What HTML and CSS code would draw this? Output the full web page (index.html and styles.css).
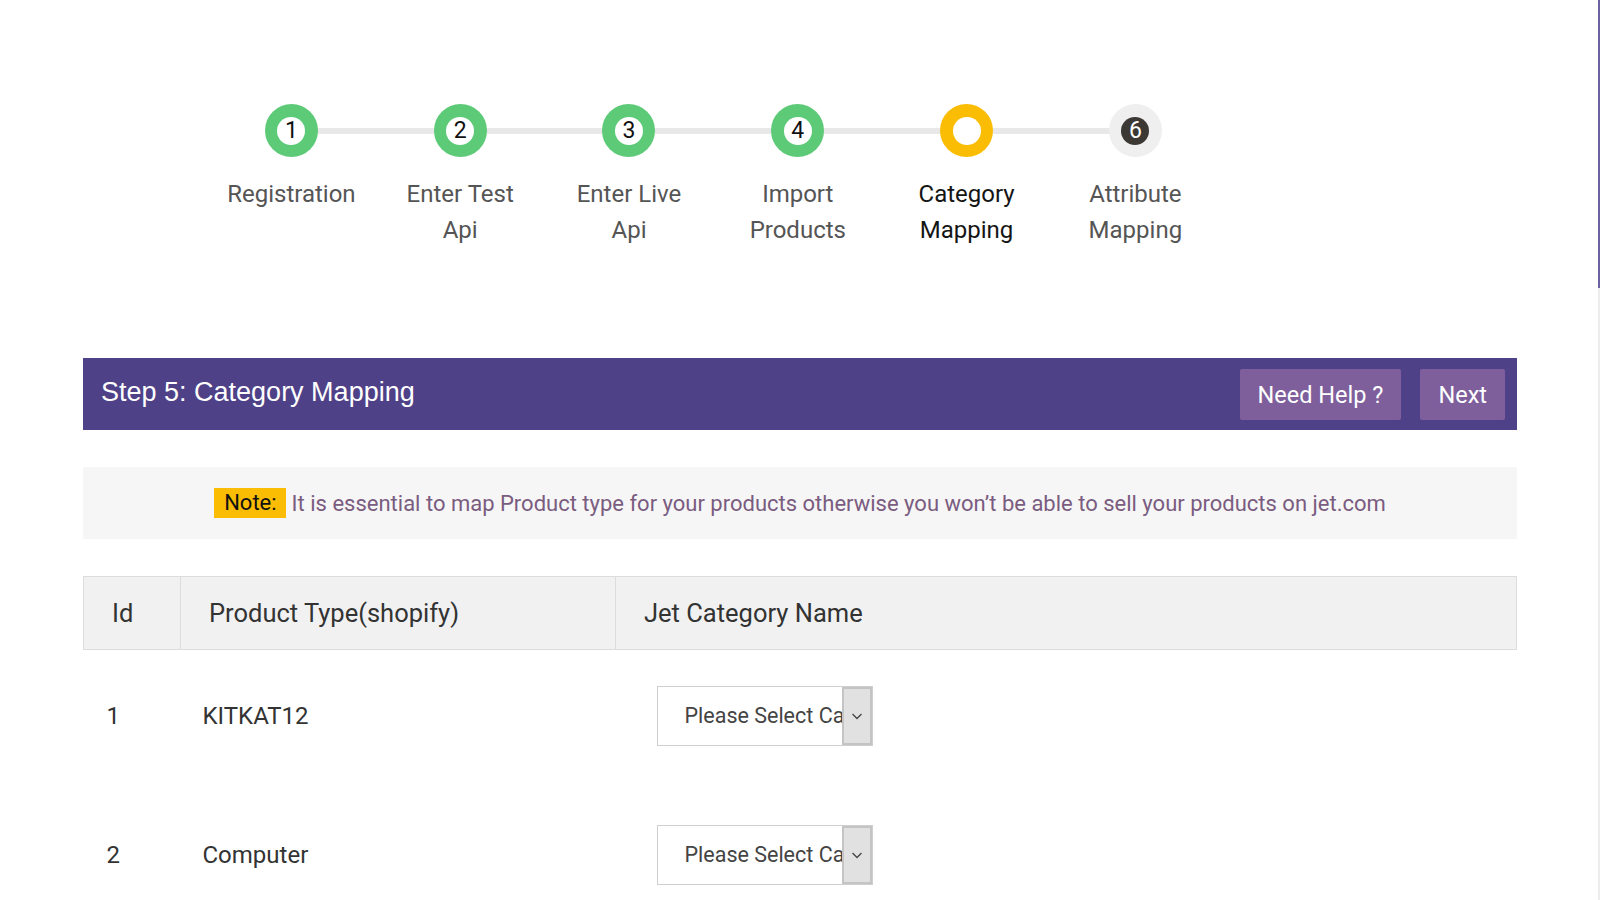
FILE: index.html
```html
<!DOCTYPE html>
<html lang="en">
<head>
    <meta charset="UTF-8">
    <meta name="viewport" content="width=device-width, initial-scale=1.0">
    <title>Category Mapping - Jet Integration</title>
    <link rel="stylesheet" href="styles.css">
</head>
<body>
    <div class="page">
        <div class="stepper">
            <div class="step done">
                <div class="circle"><span class="num">1</span></div>
                <div class="step-label">Registration</div>
            </div>
            <div class="step done">
                <div class="circle"><span class="num">2</span></div>
                <div class="step-label">Enter Test<br>Api</div>
            </div>
            <div class="step done">
                <div class="circle"><span class="num">3</span></div>
                <div class="step-label">Enter Live<br>Api</div>
            </div>
            <div class="step done">
                <div class="circle"><span class="num">4</span></div>
                <div class="step-label">Import<br>Products</div>
            </div>
            <div class="step active">
                <div class="circle"><span class="num"></span></div>
                <div class="step-label">Category<br>Mapping</div>
            </div>
            <div class="step todo">
                <div class="circle"><span class="num">6</span></div>
                <div class="step-label">Attribute<br>Mapping</div>
            </div>
        </div>

        <div class="content">
            <div class="panel-heading">
                <h2>Step 5: Category Mapping</h2>
                <div class="actions">
                    <button class="btn">Need Help ?</button>
                    <button class="btn">Next</button>
                </div>
            </div>

            <div class="note">
                <span class="note-label">Note:</span>
                <span class="note-text">It is essential to map Product type for your products otherwise you won’t be able to sell your products on jet.com</span>
            </div>

            <table class="mapping">
                <thead>
                    <tr>
                        <th class="col-id">Id</th>
                        <th class="col-type">Product Type(shopify)</th>
                        <th>Jet Category Name</th>
                    </tr>
                </thead>
                <tbody>
                    <tr>
                        <td>1</td>
                        <td>KITKAT12</td>
                        <td>
                            <div class="select">
                                <span class="select-text">Please Select Ca</span>
                                <span class="select-arrow">
                                    <svg width="14" height="14" viewBox="0 0 14 14"><path d="M2.5 5 L7 9.5 L11.5 5" fill="none" stroke="#444" stroke-width="1.3"/></svg>
                                </span>
                            </div>
                        </td>
                    </tr>
                    <tr>
                        <td>2</td>
                        <td>Computer</td>
                        <td>
                            <div class="select">
                                <span class="select-text">Please Select Ca</span>
                                <span class="select-arrow">
                                    <svg width="14" height="14" viewBox="0 0 14 14"><path d="M2.5 5 L7 9.5 L11.5 5" fill="none" stroke="#444" stroke-width="1.3"/></svg>
                                </span>
                            </div>
                        </td>
                    </tr>
                </tbody>
            </table>
        </div>
    </div>
    <div class="scrollbar">
        <div class="thumb"></div>
    </div>
</body>
</html>
```

FILE: styles.css
```css
body {
    margin: 0;
    padding: 0;
    background-color: #fff;
    font-family: 'Roboto', 'Liberation Sans', sans-serif;
    display: flex;
    height: 900px;
    overflow: hidden;
}

.page {
    flex: 0 0 1598px;
}

.scrollbar {
    flex: 0 0 2px;
    background-color: #ececec;
}

.thumb {
    height: 288px;
    background-color: #6b62a3;
}

/* stepper */
.stepper {
    display: flex;
    padding-top: 104px;
    margin-left: 207px;
}

.step {
    width: 168.8px;
    text-align: center;
    position: relative;
}

.step + .step::before {
    content: "";
    position: absolute;
    top: 24px;
    left: -50%;
    width: 100%;
    height: 6px;
    background-color: #e8e8e8;
}

.circle {
    position: relative;
    z-index: 1;
    width: 53px;
    height: 53px;
    border-radius: 50%;
    margin: 0 auto;
    display: flex;
    align-items: center;
    justify-content: center;
}

.num {
    width: 28px;
    height: 28px;
    border-radius: 50%;
    background-color: #fff;
    color: #111;
    font-size: 23px;
    line-height: 28px;
}

.done .circle {
    background-color: #5dca78;
}

.active .circle {
    background-color: #fbbd03;
}

.todo .circle {
    background-color: #efefef;
}

.todo .num {
    background-color: #3c3834;
    color: #fff;
}

.step-label {
    margin-top: 19px;
    font-size: 24px;
    line-height: 36px;
    color: #555;
}

.active .step-label {
    color: #151515;
}

/* content */
.content {
    width: 1434px;
    margin: 110px 0 0 83px;
}

.panel-heading {
    background-color: #4e4187;
    height: 72px;
    box-sizing: border-box;
    padding: 11px 12px 10px 18px;
    display: flex;
    align-items: center;
    justify-content: space-between;
}

.panel-heading h2 {
    margin: 0 0 4px 0;
    font-family: 'Liberation Sans', Arial, sans-serif;
    font-weight: normal;
    font-size: 27px;
    color: #fff;
}

.actions {
    display: flex;
    gap: 19px;
    height: 51px;
}

.btn {
    background-color: #7e5f9c;
    color: #fff;
    border: none;
    border-radius: 2px;
    font-family: 'Roboto', sans-serif;
    font-size: 23.5px;
    padding: 0 18px;
    cursor: pointer;
}

.note {
    margin-top: 37px;
    height: 72px;
    background-color: #f6f6f6;
    display: flex;
    align-items: center;
    justify-content: center;
    font-size: 22px;
}

.note-label {
    background-color: #fbbd03;
    color: #111;
    padding: 0 9px 0 10px;
    line-height: 30px;
    margin-right: 6px;
}

.note-text {
    color: #7a5c80;
}

/* table */
.mapping {
    margin-top: 37px;
    width: 100%;
    border-collapse: collapse;
}

.mapping th {
    background-color: #f1f1f1;
    border: 1px solid #dcdcdc;
    height: 72px;
    padding: 0 0 0 28px;
    text-align: left;
    font-weight: normal;
    font-size: 25.5px;
    color: #333;
}

.col-id {
    width: 97px;
    box-sizing: border-box;
}

.col-type {
    width: 435px;
    box-sizing: border-box;
}

.mapping td {
    height: 139px;
    box-sizing: border-box;
    padding: 0 0 7px 22px;
    font-size: 24px;
    color: #333;
}

.mapping td:first-child {
    padding-left: 23px;
}

.select {
    margin-left: 19px;
    width: 216px;
    height: 60px;
    box-sizing: border-box;
    border: 1px solid #cfcfcf;
    display: flex;
    align-items: center;
    overflow: hidden;
    background-color: #fff;
}

.select-text {
    flex: 1;
    overflow: hidden;
    white-space: nowrap;
    padding-left: 27px;
    font-size: 21.5px;
    color: #444;
}

.select-arrow {
    flex: 0 0 30px;
    height: 100%;
    box-sizing: border-box;
    background-color: #e1e1e1;
    border: 2px solid #c4c4c4;
    display: flex;
    align-items: center;
    justify-content: center;
}
```
